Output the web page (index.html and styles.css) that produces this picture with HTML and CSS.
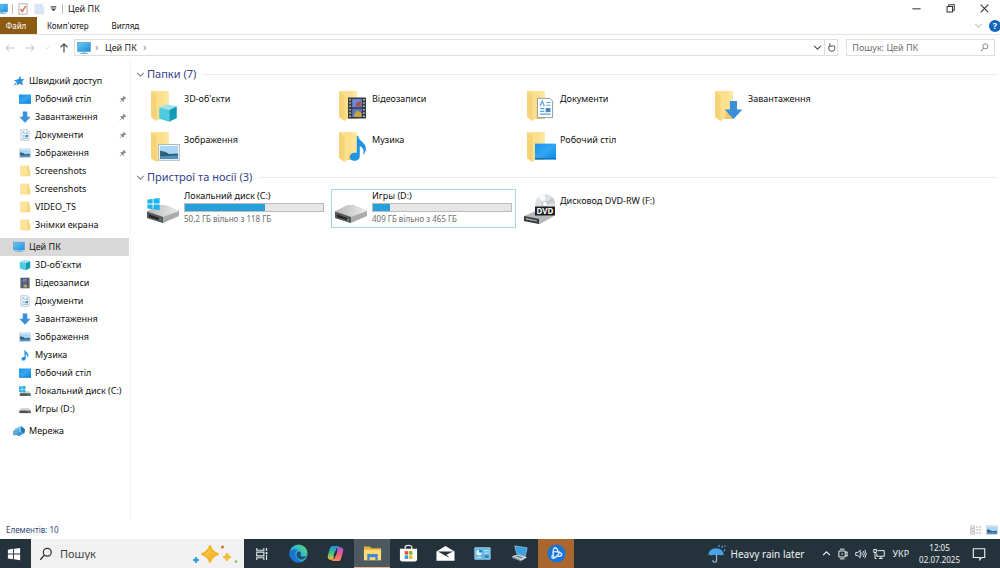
FILE: index.html
```html
<!DOCTYPE html>
<html lang="uk">
<head>
    <meta charset="UTF-8">
    <meta name="viewport" content="width=device-width, initial-scale=1.0">
    <title>Цей ПК</title>
    <link rel="stylesheet" href="styles.css">
</head>
<body>
    <!-- Icon sprite -->
    <svg class="sprite" aria-hidden="true">
        <defs>
            <linearGradient id="g-folder" x1="0" y1="0" x2="1" y2="0">
                <stop offset="0" stop-color="#f7d674"/><stop offset="1" stop-color="#ffe9a6"/>
            </linearGradient>
            <linearGradient id="g-screen" x1="0" y1="0" x2="1" y2="1">
                <stop offset="0" stop-color="#1795ec"/><stop offset="0.5" stop-color="#33a6f3"/><stop offset="1" stop-color="#0c86dd"/>
            </linearGradient>
            <linearGradient id="g-pc" x1="0" y1="0" x2="1" y2="1">
                <stop offset="0" stop-color="#6cc8f5"/><stop offset="1" stop-color="#1c8fdc"/>
            </linearGradient>
            <linearGradient id="g-drive" x1="0" y1="0" x2="1" y2="0">
                <stop offset="0" stop-color="#b9b9b9"/><stop offset="1" stop-color="#ececec"/>
            </linearGradient>
            <linearGradient id="g-edge" x1="0" y1="1" x2="1" y2="0">
                <stop offset="0" stop-color="#1068c4"/><stop offset="0.5" stop-color="#2bb3dc"/><stop offset="1" stop-color="#6bdc5c"/>
            </linearGradient>
            <linearGradient id="g-cop1" x1="0" y1="0" x2="0" y2="1">
                <stop offset="0" stop-color="#1e8fe8"/><stop offset="0.5" stop-color="#3cbf8f"/><stop offset="1" stop-color="#f2c12e"/>
            </linearGradient>
            <linearGradient id="g-cop2" x1="0" y1="0" x2="0" y2="1">
                <stop offset="0" stop-color="#a25be8"/><stop offset="0.5" stop-color="#ee5a8b"/><stop offset="1" stop-color="#f9904a"/>
            </linearGradient>
            <linearGradient id="g-star" x1="0" y1="0" x2="1" y2="1">
                <stop offset="0" stop-color="#ffd84a"/><stop offset="1" stop-color="#f0a31c"/>
            </linearGradient>
        </defs>

        <symbol id="i-pc" viewBox="0 0 16 16">
            <rect x="0.500" y="1.500" width="15" height="10.500" fill="url(#g-pc)" stroke="#5d9fc9" stroke-width="0.8"/>
            <path d="M6.500 12h3v1.500h-3z" fill="#8fa9bb"/>
            <path d="M3 13.500h10v1.200H3z" fill="#6fb4df"/>
        </symbol>
        <symbol id="i-star" viewBox="0 0 16 16">
            <path d="M9.500 1l1.300 4.300 4.700.4-3.500 3 1.400 5.300-4.400-2.500L5 14l.5-4.500L1 7l6-1.300z" fill="#2a93dd"/>
            <path d="M5 10L1.500 13.500" stroke="#2a93dd" stroke-width="1.400"/>
        </symbol>
        <symbol id="i-desktop" viewBox="0 0 16 16">
            <rect x="0" y="2" width="16" height="12" fill="url(#g-screen)"/>
            <rect x="0" y="13" width="16" height="1" fill="#0a6fc0"/>
        </symbol>
        <symbol id="i-down" viewBox="0 0 16 16">
            <path d="M5 0.500h6v7h4.500L8 15.500.5 7.500H5z" fill="#3a8fdb"/>
        </symbol>
        <symbol id="i-doc" viewBox="0 0 16 16">
            <path d="M2.500 1h9l2 2v12h-11z" fill="#fafcfe" stroke="#8f9aa3" stroke-width="0.700"/>
            <path d="M4.500 6.500l1.500-3.500 1.500 3.500M9 4h3M9 6h3M4.500 8.500h3M4.500 10.500h3M4.500 12.500h7.500" stroke="#5aa2d6" stroke-width="0.900" fill="none"/>
            <path d="M8.500 8h3.500v3h-3.500z" fill="#4a86b4"/>
        </symbol>
        <symbol id="i-image" viewBox="0 0 16 16">
            <rect x="0.500" y="2.500" width="15" height="11.500" fill="#fff" stroke="#a3b3bf" stroke-width="0.700"/>
            <rect x="1.500" y="3.500" width="13" height="9.500" fill="#a9d6f2"/>
            <path d="M1.500 7q4.500.5 6.500 2.500l6.500-.5v4h-13z" fill="#2f5f7a"/>
            <path d="M1.500 11l13-.5V13h-13z" fill="#4f93bd"/>
        </symbol>
        <symbol id="i-folder" viewBox="0 0 16 16">
            <path d="M2 1h11.500v4.500l1.500.5v9H2z" fill="#f5d67b"/>
            <path d="M2 1h9v13H2z" fill="#fce59a"/>
        </symbol>
        <symbol id="i-cube" viewBox="0 0 16 16">
            <path d="M1 3.500l6-2.500 8 1.500-6 3z" fill="#9be4ee"/>
            <path d="M1 3.500l8 2v9.500l-8-2.500z" fill="#4fcbe0"/>
            <path d="M9 5.500l6-3v9.500l-6 3z" fill="#119bb5"/>
        </symbol>
        <symbol id="i-film" viewBox="0 0 16 16">
            <rect x="2" y="1" width="12" height="14" fill="#333a4c"/>
            <rect x="4.800" y="2" width="6.400" height="5.500" fill="#6f88d8"/>
            <rect x="4.800" y="8.500" width="6.400" height="5.500" fill="#5a78c8"/>
            <path d="M6 12.500l2-3 3 2v2.500H6z" fill="#c9a53a"/>
            <path d="M7.500 5l3-2v4H7z" fill="#a8553f"/>
            <path d="M3.400 2v13M12.600 2v13" stroke="#c4c4a8" stroke-width="1.100" stroke-dasharray="1 1.200"/>
        </symbol>
        <symbol id="i-note" viewBox="0 0 16 16">
            <path d="M8 1c.3 3 5 4 4.500 8-.3 1.500-1 2.300-1.700 2.800.9-2.500.2-4-1.800-5v5.700c0 1.700-1.400 2.800-3 2.800S3.300 14.500 3.300 13.200s1.300-2.500 2.900-2.500c.4 0 .8 0 1.100.2V1z" fill="#1f93e0"/>
        </symbol>
        <symbol id="i-win" viewBox="0 0 16 16">
            <path d="M1 3l6-.9v5.400H1zM8 2l7-1v6.500H8zM1 8.500h6v5.400L1 13zM8 8.500h7V15l-7-1z"/>
        </symbol>
        <symbol id="i-drive-small" viewBox="0 0 16 16">
            <path d="M3 6.500h10l2.500 3.500H.5z" fill="#d4d4d4"/>
            <path d="M.5 10h15v3.500H.5z" fill="#4b4f52"/>
            <path d="M11.500 11.500h2" stroke="#79d48a"/>
        </symbol>
        <symbol id="i-drive-win" viewBox="0 0 16 16">
            <path d="M5 8h8l2.500 2.500H.5z" fill="#d4d4d4"/>
            <path d="M1 11h14.500v3.500H1z" fill="#4b4f52"/>
            <path d="M11.500 12.500h2" stroke="#79d48a"/>
            <path d="M0 2l3.700-.5v3.700H0zM4.400 1.500L8.500 1v4.200H4.400zM0 6h3.700v3.500L0 9zM4.400 6h4.100v4l-4.100-.5z" fill="#23afe3"/>
        </symbol>
        <symbol id="i-network" viewBox="0 0 16 16">
            <path d="M3 5l8-3.500 5 4.500-1 5-7 4-6-3z" fill="#3f9bd6"/>
            <path d="M3 5l8-3.500v7.500L4 11z" fill="#7cc3ea"/>
            <path d="M.5 8l7-1.500v5.500l-7 1.500z" fill="#5aaede" stroke="#2d81b8" stroke-width="0.600"/>
            <path d="M11 1.500L16 6l-1 5-4-2z" fill="#1f77b4"/>
        </symbol>
        <symbol id="i-pin" viewBox="0 0 16 16">
            <path d="M9.500 1.500l5 5-1.500.8-1 .2-2.500 2.500.3 2.500-1.300 1L2.500 7.500l1-1.300 2.500.3 2.500-2.500.2-1z" fill="#858b90"/>
            <path d="M5.500 10.500L1.500 14.500" stroke="#858b90" stroke-width="1.600"/>
        </symbol>

        <!-- Large icons -->
        <symbol id="l-folder" viewBox="0 0 32 32">
            <path d="M4 1h18v28H8z" fill="#eec868"/>
            <path d="M9 1h13v22H9z" fill="url(#g-folder)"/>
            <path d="M4 1h9.500l1 3v23l-5 4L4 27z" fill="#fbdf8c"/>
            <path d="M4 27l5.500 4V5L4 1z" fill="#f6d377"/>
        </symbol>
        <symbol id="l-drive" viewBox="0 0 32 32">
            <path d="M0 19.500L13 13h5l14 6v5L16 31 0 26z" fill="#a9abad"/>
            <path d="M0 19.500L13 13h5l14 6-16 6z" fill="url(#g-drive)"/>
            <path d="M0 19.500L16 25v6L0 26z" fill="#55595b"/>
            <path d="M2 22.500l10 3.500v2L2 25z" fill="#222"/>
            <path d="M12.500 27.500l1.500.4" stroke="#3fd08b"/>
        </symbol>

        <!-- Line icons -->
        <symbol id="i-search" viewBox="0 0 16 16">
            <circle cx="9.500" cy="6" r="4.500" fill="none" stroke="currentColor" stroke-width="1.400"/>
            <path d="M6.300 9.200L1.500 14.500" stroke="currentColor" stroke-width="1.600"/>
        </symbol>
        <symbol id="i-chevron" viewBox="0 0 16 16">
            <path d="M2 5l6 6 6-6" fill="none" stroke="currentColor" stroke-width="2"/>
        </symbol>
        <symbol id="i-right" viewBox="0 0 16 16">
            <path d="M5 3l5 5-5 5" fill="none" stroke="currentColor" stroke-width="2.500"/>
        </symbol>
        <symbol id="i-arrow" viewBox="0 0 16 16">
            <path d="M14 8H2.500M7 3.500L2.500 8 7 12.500" fill="none" stroke="currentColor" stroke-width="1.700"/>
        </symbol>
    </svg>

    <div class="window">
        <header class="titlebar">
            <div class="quick-access">
                <svg class="icon title-pc"><use href="#i-pc"/></svg>
                <span class="divider"></span>
                <button class="plain" aria-label="Властивості">
                    <svg class="icon" viewBox="0 0 16 16"><path d="M2.500 1h11v14h-11z" fill="#fafafa" stroke="#9b9b9b"/><path d="M4.500 8l2.500 3.500L11.500 4" fill="none" stroke="#d6603c" stroke-width="1.700"/></svg>
                </button>
                <button class="plain" aria-label="Нова папка">
                    <svg class="icon" viewBox="0 0 16 16"><path d="M2 1h11v4h2v10H2z" fill="#dbe6f4"/></svg>
                </button>
                <button class="plain" aria-label="Настроїти панель">
                    <svg class="icon small" viewBox="0 0 16 16"><path d="M3 4h10v2H3zM3 8h10l-5 5z" fill="#444"/></svg>
                </button>
                <span class="divider"></span>
            </div>
            <h1>Цей ПК</h1>
            <div class="window-buttons">
                <button class="plain" aria-label="Згорнути"><svg class="icon" viewBox="0 0 16 16"><path d="M2 8.500h12" stroke="#333" stroke-width="1.500"/></svg></button>
                <button class="plain" aria-label="Відновити"><svg class="icon" viewBox="0 0 16 16"><path d="M3 5h8v8H3zM5.500 5V2.700h8v8H11" fill="none" stroke="#333" stroke-width="1.500"/></svg></button>
                <button class="plain" aria-label="Закрити"><svg class="icon" viewBox="0 0 16 16"><path d="M2.500 2.500l11 11M13.500 2.500l-11 11" stroke="#333" stroke-width="1.500"/></svg></button>
            </div>
        </header>

        <div class="ribbon">
            <button class="tab file">Файл</button>
            <button class="tab">Комп'ютер</button>
            <button class="tab">Вигляд</button>
            <div class="ribbon-end">
                <button class="plain" aria-label="Розгорнути стрічку"><svg class="icon small pale"><use href="#i-chevron"/></svg></button>
                <button class="help" aria-label="Довідка">?</button>
            </div>
        </div>

        <div class="address-row">
            <div class="nav-buttons">
                <button class="plain pale" aria-label="Назад"><svg class="icon"><use href="#i-arrow"/></svg></button>
                <button class="plain pale" aria-label="Вперед"><svg class="icon flip"><use href="#i-arrow"/></svg></button>
                <button class="plain pale" aria-label="Останні"><svg class="icon tiny"><use href="#i-chevron"/></svg></button>
                <button class="plain" aria-label="Вгору"><svg class="icon up"><use href="#i-arrow"/></svg></button>
            </div>
            <div class="address">
                <svg class="icon address-pc"><use href="#i-pc"/></svg>
                <svg class="icon tiny"><use href="#i-right"/></svg>
                <a href="#">Цей ПК</a>
                <svg class="icon tiny"><use href="#i-right"/></svg>
                <button class="plain address-menu" aria-label="Попередні розташування"><svg class="icon small"><use href="#i-chevron"/></svg></button>
                <button class="plain refresh" aria-label="Оновити"><svg class="icon small" viewBox="0 0 16 16"><path d="M11.500 4.500a5.500 5.500 0 1 1-6 0M5 0v5.500h5.500" fill="none" stroke="#666" stroke-width="1.900"/></svg></button>
            </div>
            <div class="search-box">
                <input type="text" placeholder="Пошук: Цей ПК" aria-label="Пошук: Цей ПК">
                <svg class="icon small"><use href="#i-search"/></svg>
            </div>
        </div>

        <div class="main">
            <nav class="sidebar">
                <ul>
                    <li class="root"><a href="#"><svg class="icon"><use href="#i-star"/></svg>Швидкий доступ</a></li>
                    <li><a href="#"><svg class="icon"><use href="#i-desktop"/></svg>Робочий стіл<svg class="pin"><use href="#i-pin"/></svg></a></li>
                    <li><a href="#"><svg class="icon"><use href="#i-down"/></svg>Завантаження<svg class="pin"><use href="#i-pin"/></svg></a></li>
                    <li><a href="#"><svg class="icon"><use href="#i-doc"/></svg>Документи<svg class="pin"><use href="#i-pin"/></svg></a></li>
                    <li><a href="#"><svg class="icon"><use href="#i-image"/></svg>Зображення<svg class="pin"><use href="#i-pin"/></svg></a></li>
                    <li><a href="#"><svg class="icon"><use href="#i-folder"/></svg>Screenshots</a></li>
                    <li><a href="#"><svg class="icon"><use href="#i-folder"/></svg>Screenshots</a></li>
                    <li><a href="#"><svg class="icon"><use href="#i-folder"/></svg>VIDEO_TS</a></li>
                    <li><a href="#"><svg class="icon"><use href="#i-folder"/></svg>Знімки екрана</a></li>
                </ul>
                <ul>
                    <li class="root current"><a href="#"><svg class="icon"><use href="#i-pc"/></svg>Цей ПК</a></li>
                    <li><a href="#"><svg class="icon"><use href="#i-cube"/></svg>3D-об'єкти</a></li>
                    <li><a href="#"><svg class="icon"><use href="#i-film"/></svg>Відеозаписи</a></li>
                    <li><a href="#"><svg class="icon"><use href="#i-doc"/></svg>Документи</a></li>
                    <li><a href="#"><svg class="icon"><use href="#i-down"/></svg>Завантаження</a></li>
                    <li><a href="#"><svg class="icon"><use href="#i-image"/></svg>Зображення</a></li>
                    <li><a href="#"><svg class="icon"><use href="#i-note"/></svg>Музика</a></li>
                    <li><a href="#"><svg class="icon"><use href="#i-desktop"/></svg>Робочий стіл</a></li>
                    <li><a href="#"><svg class="icon"><use href="#i-drive-win"/></svg>Локальний диск (C:)</a></li>
                    <li><a href="#"><svg class="icon"><use href="#i-drive-small"/></svg>Игры (D:)</a></li>
                </ul>
                <ul>
                    <li class="root"><a href="#"><svg class="icon"><use href="#i-network"/></svg>Мережа</a></li>
                </ul>
            </nav>

            <main class="content">
                <section>
                    <h2><svg class="icon small"><use href="#i-chevron"/></svg>Папки (7)</h2>
                    <div class="tiles folders">
                        <a class="tile" href="#">
                            <svg class="large" viewBox="0 0 32 32"><use href="#l-folder"/><use href="#i-cube" x="11" y="13" width="20" height="20"/></svg>
                            <span class="name">3D-об'єкти</span>
                        </a>
                        <a class="tile" href="#">
                            <svg class="large" viewBox="0 0 32 32"><use href="#l-folder"/><use href="#i-film" x="10" y="6" width="24" height="24"/></svg>
                            <span class="name">Відеозаписи</span>
                        </a>
                        <a class="tile" href="#">
                            <svg class="large" viewBox="0 0 32 32"><use href="#l-folder"/><use href="#i-doc" x="11" y="7" width="22" height="22"/></svg>
                            <span class="name">Документи</span>
                        </a>
                        <a class="tile" href="#">
                            <svg class="large" viewBox="0 0 32 32"><use href="#l-folder"/><use href="#i-down" x="13" y="10" width="19" height="20"/></svg>
                            <span class="name">Завантаження</span>
                        </a>
                        <a class="tile" href="#">
                            <svg class="large" viewBox="0 0 32 32"><use href="#l-folder"/><use href="#i-image" x="11" y="10" width="22" height="22"/></svg>
                            <span class="name">Зображення</span>
                        </a>
                        <a class="tile" href="#">
                            <svg class="large" viewBox="0 0 32 32"><use href="#l-folder"/><use href="#i-note" x="9" y="3" width="28" height="28"/></svg>
                            <span class="name">Музика</span>
                        </a>
                        <a class="tile" href="#">
                            <svg class="large" viewBox="0 0 32 32"><use href="#l-folder"/><use href="#i-desktop" x="12" y="10" width="21" height="21"/></svg>
                            <span class="name">Робочий стіл</span>
                        </a>
                    </div>
                </section>
                <section>
                    <h2><svg class="icon small"><use href="#i-chevron"/></svg>Пристрої та носії (3)</h2>
                    <div class="tiles">
                        <a class="tile drive" href="#">
                            <svg class="large" viewBox="0 0 32 32"><use href="#l-drive"/><use href="#i-win" x="-1" y="5" width="15" height="14" fill="#1fb4ea"/></svg>
                            <span class="info">
                                <span class="name">Локальний диск (C:)</span>
                                <span class="bar"><span class="used" style="width: 58%"></span></span>
                                <span class="free">50,2 ГБ вільно з 118 ГБ</span>
                            </span>
                        </a>
                        <a class="tile drive selected" href="#">
                            <svg class="large" viewBox="0 0 32 32"><use href="#l-drive"/></svg>
                            <span class="info">
                                <span class="name">Игры (D:)</span>
                                <span class="bar"><span class="used" style="width: 12%"></span></span>
                                <span class="free">409 ГБ вільно з 465 ГБ</span>
                            </span>
                        </a>
                        <a class="tile disc" href="#">
                            <svg class="large" viewBox="0 0 32 32">
                                <path d="M1 24L13 19h18v5l-14 8-16-3z" fill="#b5b7b9"/>
                                <path d="M1 24l15 3v5L1 29z" fill="#383b3d"/>
                                <path d="M3 26l11 2.500v1L3 27.500z" fill="#b5b7b9"/>
                                <circle cx="22" cy="12" r="10" fill="#dde1e4"/>
                                <path d="M22 12L15 5a10 10 0 0 1 7-3zM22 12l9.500 3a10 10 0 0 1-2 3.500z" fill="#f6f8f9"/>
                                <path d="M22 12l7-7a10 10 0 0 1 3 6z" fill="#c5cdd1"/>
                                <circle cx="22" cy="12" r="2.600" fill="#fff" stroke="#aab0b4" stroke-width="0.700"/>
                                <rect x="12" y="14.500" width="20" height="9" rx="0.500" fill="#1c1e20"/>
                                <text x="22" y="22" class="dvd-text">DVD</text>
                            </svg>
                            <span class="name">Дисковод DVD-RW (F:)</span>
                        </a>
                    </div>
                </section>
            </main>
        </div>

        <footer class="status">
            <span>Елементів: 10</span>
            <div class="views">
                <button class="plain" aria-label="Таблиця"><svg class="icon" viewBox="0 0 16 16"><path d="M1 2.500h5v3H1zM1 6.500h5v3H1zM1 10.500h5v3H1z" fill="none" stroke="#aaa"/><path d="M8 4h7M8 8h7M8 12h7" stroke="#999" stroke-dasharray="3 1"/></svg></button>
                <button class="plain" aria-label="Великі ескізи"><svg class="icon"><use href="#i-image"/></svg></button>
            </div>
        </footer>
    </div>

    <!-- Taskbar -->
    <div class="taskbar">
        <button class="start" aria-label="Пуск"><svg class="icon" fill="#fff"><use href="#i-win"/></svg></button>
        <div class="task-search">
            <svg class="icon"><use href="#i-search"/></svg>
            <input type="text" placeholder="Пошук" aria-label="Пошук">
            <svg class="sparkles" viewBox="0 0 46 22">
                <path d="M18 3q1.800 6 8 8-6.200 2-8 8-1.800-6-8-8 6.200-2 8-8z" fill="url(#g-star)" stroke="#f3b42a" stroke-width="2" stroke-linejoin="round"/>
                <path d="M35 10q.8 3.200 4 4-3.200.8-4 4-.8-3.200-4-4 3.200-.8 4-4z" fill="#f5bf35" stroke="#f3b42a"/>
                <path d="M4 14q.5 2.500 3 3-2.500.5-3 3-.5-2.500-3-3 2.500-.5 3-3z" fill="#2d9be0" stroke="#2d9be0"/>
                <circle cx="30.500" cy="4" r="1.600" fill="#d9713c"/>
                <circle cx="44" cy="18.500" r="1.300" fill="#8dbb62"/>
            </svg>
        </div>
        <div class="apps">
            <button class="view" aria-label="Подання завдань">
                <svg class="icon" viewBox="0 0 16 16"><path d="M1 0v3h9.500V0M1 16v-3h9.500v3M1 5.500h9.500v5H1zM14 0v4M14 9v7" fill="none" stroke="#e4e8ea" stroke-width="1.500"/><path d="M12.800 5.500h2.500v2.500h-2.500z" fill="#e4e8ea"/></svg>
            </button>
            <button aria-label="Microsoft Edge">
                <svg class="app" viewBox="0 0 20 20">
                    <circle cx="10" cy="10" r="9.500" fill="url(#g-edge)"/>
                    <path d="M.5 11C1 6 6 4.500 9.500 6.500 6 7.500 5.500 12 8 15c1.200 1.800 3 3 5 3.800A9.500 9.500 0 0 1 .5 11z" fill="#1b72d0"/>
                    <path d="M9.500 8c2.500-.5 4 1.500 2.700 3.600-.6 1.400 3.800 2.500 6.300.7-1 2.200-3 4-6 4C8 15.500 6.500 10.500 9.500 8z" fill="#22506f"/>
                </svg>
            </button>
            <button aria-label="Copilot">
                <svg class="app" viewBox="0 0 20 20">
                    <path d="M7 2h5c1.500 0 2 1 2.500 2.500H11L8 14.500c-.5 1.500-1 2-2.500 2C2 16.500 1.500 14 2 12L4 5c.6-2 1.500-3 3-3z" fill="url(#g-cop1)"/>
                    <path d="M13 18H8c-1.500 0-2-1-2.500-2.500H9L12 5.500c.5-1.500 1-2 2.500-2C18 3.500 18.500 6 18 8l-2 7c-.6 2-1.500 3-3 3z" fill="url(#g-cop2)"/>
                    <path d="M9.500 7.500h2.500l-1.700 5H7.800z" fill="#24333b"/>
                </svg>
            </button>
            <button class="open" aria-label="Провідник">
                <svg class="app" viewBox="0 0 20 20">
                    <path d="M1 2.500h6l2 2h10v12.500H1z" fill="#e8b23a"/>
                    <path d="M1 6h18v11H1z" fill="#fcdb78"/>
                    <path d="M4.500 10.500h11V17H13v-3H7v3H4.500z" fill="#4289cf"/>
                </svg>
            </button>
            <button aria-label="Microsoft Store">
                <svg class="app" viewBox="0 0 20 20">
                    <path d="M6.500 6V3.500q0-2 3.500-2t3.500 2V6" fill="none" stroke="#dfe3e5" stroke-width="1.400"/>
                    <path d="M1 5h18v11q0 2.500-2.500 2.500h-13Q1 18.500 1 16z" fill="#fff"/>
                    <path d="M6 7.500h3.700v3.700H6z" fill="#e8502f"/><path d="M10.500 7.500h3.700v3.700h-3.700z" fill="#7fb82e"/>
                    <path d="M6 12h3.700v3.700H6z" fill="#2c9de0"/><path d="M10.500 12h3.700v3.700h-3.700z" fill="#f7b922"/>
                </svg>
            </button>
            <button aria-label="Пошта">
                <svg class="app" viewBox="0 0 20 20">
                    <path d="M.5 8L10 2l9.500 6v9.500H.5z" fill="#fff"/>
                    <path d="M2 8h16l-7 3.200 3.500 3.300L9.500 12z" fill="#24333b"/>
                </svg>
            </button>
            <button aria-label="Панель керування">
                <svg class="app" viewBox="0 0 20 20">
                    <path d="M2 4h16v12H2z" fill="#5fb4e2" stroke="#a6d8f0"/>
                    <circle cx="6.500" cy="9" r="3" fill="#d9f0fb"/><path d="M6.500 9V6a3 3 0 0 1 3 3z" fill="#1f74ad"/>
                    <path d="M11.500 7h5M11.500 9.500h5M4 14h5" stroke="#b9e2f5" stroke-width="1.300"/>
                    <path d="M12.500 12h4v2.500h-4z" fill="#2880ba"/>
                </svg>
            </button>
            <button aria-label="Віддалений робочий стіл">
                <svg class="app" viewBox="0 0 20 20">
                    <path d="M5 2l13 2-2 9.500-9-3.500z" fill="#3c9fe0" stroke="#9ed0ef" stroke-width="0.700"/>
                    <path d="M2 13l6-2 10 3-6 3.500z" fill="#d4dbe0"/>
                    <path d="M2 13l10 4.500v1L2 14.500z" fill="#8999a3"/>
                    <path d="M5.500 13l2.500-.8 6 2-2.500 1.200z" fill="#718895"/>
                </svg>
            </button>
            <button class="alert" aria-label="Battle.net">
                <svg class="app" viewBox="0 0 20 20">
                    <circle cx="10" cy="10" r="9.500" fill="#1674dc"/>
                    <path d="M7.500 14.500C6 11 6 5.500 8 4c1.500-.5 3 1.500 3.500 3.500M6 8.500c4-1.300 9.500.5 9.500 2.500 0 1.500-2 2-4 2M13 8.500c-1 3-4 6.500-6.500 6.500-1.500 0-1.500-1.500-.8-3" fill="none" stroke="#d9ecff" stroke-width="1.500" stroke-linecap="round"/>
                </svg>
            </button>
        </div>
        <div class="tray">
            <button class="weather">
                <svg class="app" viewBox="0 0 20 20">
                    <path d="M0 12Q1 5 8.500 4.500 16 5 17 12q-2-1.500-4 0-2-1.500-4.500 0-2-1.500-4.500 0-2-1.500-4 0z" fill="#4aa3e6"/>
                    <path d="M9 11v6q0 2-2 2t-2-2" fill="none" stroke="#8db7d6" stroke-width="1.300"/>
                    <path d="M11 3l1-2M14.500 4l1-2M17 7.500l1-2M17.500 3l.7-1.500" stroke="#4aa3e6" stroke-width="1.300"/>
                </svg>
                Heavy rain later
            </button>
            <button aria-label="Приховані піктограми"><svg class="icon small turn"><use href="#i-chevron"/></svg></button>
            <button aria-label="Камера"><svg class="icon" viewBox="0 0 16 16"><path d="M4 1.500h6M2.500 4h8.500v8H2.500zM11 6.500L13.500 5v6L11 9.500M4 14.500h6" fill="none" stroke="currentColor" stroke-width="1.300"/><circle cx="6.800" cy="8" r="1" fill="currentColor"/></svg></button>
            <button aria-label="Гучність"><svg class="icon" viewBox="0 0 16 16"><path d="M1 6h2.500L7 3v10L3.500 10H1zM9 6q1.500 2 0 4M11 4q3 4 0 8M13 2.500q4 5.500 0 11" fill="none" stroke="currentColor" stroke-width="1.200"/></svg></button>
            <button aria-label="Мережа"><svg class="icon" viewBox="0 0 16 16"><path d="M6 3.500h9v7.500H5V7.500M8 14h5M10.500 11v3M1 2h3.500v4H1zM2.700 6v8h2" fill="none" stroke="currentColor" stroke-width="1.300"/></svg></button>
            <button class="lang">УКР</button>
            <button class="clock"><time>12:05</time><time>02.07.2025</time></button>
            <button class="notes" aria-label="Сповіщення"><svg class="icon" viewBox="0 0 16 16"><path d="M1.500 2h13v10H11l-2 2.500V12H1.500z" fill="none" stroke="currentColor" stroke-width="1.300"/></svg></button>
        </div>
    </div>
</body>
</html>
```

FILE: styles.css
```css
* {
    box-sizing: border-box;
}

body {
    margin: 0;
    height: 100vh;
    display: flex;
    flex-direction: column;
    overflow: hidden;
    background: white;
    color: #111;
    font-family: "Noto Sans", "Open Sans", sans-serif;
    font-size: 9px;
    line-height: 12px;
}

a {
    color: inherit;
    text-decoration: none;
}

button,
input {
    font: inherit;
    color: inherit;
    border: none;
    background: none;
    padding: 0;
    min-width: 0;
}

button {
    display: flex;
    align-items: center;
    justify-content: center;
}

h1,
h2,
ul {
    margin: 0;
    padding: 0;
    font-weight: normal;
}

.sprite {
    position: absolute;
    width: 0;
    height: 0;
}

.icon {
    width: 12px;
    height: 12px;
    flex: none;
}

.icon.small {
    width: 9px;
    height: 9px;
}

.icon.tiny {
    width: 6px;
    height: 6px;
}

.flip {
    transform: scaleX(-1);
}

.up {
    transform: rotate(90deg);
}

.turn {
    transform: rotate(180deg);
}

.pale {
    color: #c4c4c4;
}

.window {
    flex: 1;
    min-height: 0;
    display: flex;
    flex-direction: column;
}

/* Title bar */
.titlebar {
    display: flex;
    align-items: center;
    height: 17px;
}

.quick-access {
    display: flex;
    align-items: center;
    gap: 4px;
    margin-right: 5px;
}

.title-pc {
    margin-left: -4px;
}

.divider {
    width: 1px;
    height: 10px;
    background: #bbb;
}

h1 {
    font-size: 9px;
}

.window-buttons {
    display: flex;
    gap: 23px;
    margin-left: auto;
    padding-right: 10px;
}

.window-buttons .icon {
    width: 11px;
    height: 11px;
}

/* Ribbon */
.ribbon {
    display: flex;
    height: 18px;
    border-bottom: 1px solid #e3e3e3;
}

.tab {
    padding: 0 10px;
    margin-right: 3px;
    font-size: 8px;
}

.tab.file {
    width: 37px;
    margin-right: 0;
    padding: 0 5px 0 0;
    background: #8c5a12;
    color: white;
}

.ribbon-end {
    display: flex;
    align-items: center;
    gap: 6px;
    margin-left: auto;
    margin-right: -1px;
}

.help {
    width: 12px;
    height: 12px;
    border-radius: 50%;
    background: #1166b8;
    color: white;
    font-weight: bold;
}

/* Address bar */
.address-row {
    display: flex;
    align-items: center;
    gap: 8px;
    padding: 4px 5px 4px 4px;
}

.nav-buttons {
    display: flex;
    align-items: center;
    gap: 8px;
    margin-right: -4px;
    color: #555;
}

.nav-buttons .pale {
    color: #d2d2d2;
}

.address {
    display: flex;
    align-items: center;
    flex: 1;
    gap: 5px;
    height: 17px;
    padding-left: 2px;
    border: 1px solid #dedede;
    color: #222;
}

.address > .tiny {
    color: #666;
}

.address-pc {
    width: 14px;
    height: 14px;
    margin-right: -2px;
}

.address-menu {
    margin-left: auto;
    margin-right: -3px;
    color: #555;
}

.refresh {
    width: 13px;
    height: 15px;
    border-left: 1px solid #dedede;
}

.search-box {
    display: flex;
    align-items: center;
    width: 15%;
    height: 17px;
    padding: 0 5px;
    border: 1px solid #dedede;
    color: #666;
}

.search-box input {
    flex: 1;
}

input::placeholder {
    color: #6d6d6d;
    opacity: 1;
}

/* Folder tree and content */
.main {
    flex: 1;
    display: flex;
    min-height: 0;
}

.sidebar {
    width: 131px;
    padding: 12px 1px 0 0;
    border-right: 1px solid #f2f2f2;
}

.sidebar ul {
    margin-bottom: 4px;
    list-style: none;
}

.sidebar a {
    display: flex;
    align-items: center;
    gap: 4px;
    height: 18px;
    padding-left: 19px;
    white-space: nowrap;
}

.sidebar .root a {
    padding-left: 13px;
}

.sidebar .current {
    background: #d9d9d9;
}

.pin {
    width: 8px;
    height: 8px;
    margin-left: auto;
    margin-right: 2px;
}

.content {
    flex: 1;
    padding: 6px 2px 0 5px;
}

h2 {
    display: flex;
    align-items: center;
    gap: 2px;
    height: 16px;
    color: #35418a;
    font-size: 11px;
    line-height: 16px;
}

h2::after {
    content: "";
    flex: 1;
    height: 1px;
    margin-left: 4px;
    background: #ececec;
}

h2 .icon {
    color: #888;
}

.tiles {
    display: grid;
    grid-template-columns: repeat(auto-fill, 185px);
    column-gap: 3px;
    padding: 4px 0 0 7px;
}

.folders {
    padding-top: 5px;
}

.tile {
    display: flex;
    gap: 5px;
    height: 39px;
    padding: 2px 3px;
    border: 1px solid transparent;
}

.folders .tile {
    height: 41px;
}

.large {
    width: 32px;
    height: 32px;
    flex: none;
    overflow: visible;
}

.tile > .name {
    padding-top: 3px;
}

.info {
    display: flex;
    flex-direction: column;
    flex: 1;
}

.info .name {
    margin-top: -2px;
}

.bar {
    height: 10px;
    margin: 1px 0;
    border: 1px solid #bcbcbc;
    background: #e6e6e6;
}

.used {
    display: block;
    height: 100%;
    background: #26a0da;
}

.free {
    color: #6d6d6d;
    font-size: 8px;
}

.selected {
    border-color: #a4dbea;
}

.dvd-text {
    fill: white;
    font-size: 8px;
    font-weight: bold;
    text-anchor: middle;
}

/* Status bar */
.status {
    display: flex;
    align-items: center;
    justify-content: space-between;
    height: 18px;
    padding: 0 2px 0 6px;
    color: #2c3f70;
    font-size: 8px;
}

.views {
    display: flex;
    gap: 4px;
}

/* Taskbar */
.taskbar {
    display: flex;
    height: 29px;
    background: #24333b;
    color: #eef1f2;
}

.start {
    width: 31px;
    padding-right: 4px;
}

.start .icon {
    width: 14px;
    height: 14px;
}

.task-search {
    display: flex;
    align-items: center;
    gap: 7px;
    width: 213px;
    padding: 0 6px 0 8px;
    background: #f1f1f1;
    color: #333;
    font-size: 11px;
}

.task-search input {
    flex: 1;
}

.task-search input::placeholder {
    color: #444;
}

.task-search .icon {
    width: 14px;
    height: 14px;
}

.sparkles {
    width: 46px;
    height: 22px;
}

.apps {
    display: flex;
}

.apps button {
    width: 37px;
}

.apps .view,
.apps .open,
.apps .alert {
    width: 36px;
}

.app {
    width: 19px;
    height: 19px;
    flex: none;
}

.apps .open {
    background: #4c595f;
    border-bottom: 1px solid #e2b08a;
}

.apps .alert {
    background: #a9662e;
}

.tray {
    display: flex;
    align-items: center;
    gap: 6px;
    margin-left: auto;
    padding-right: 14px;
}

.weather {
    gap: 4px;
    margin-right: 12px;
    font-size: 10px;
}

.lang {
    margin-left: 1px;
}

.clock {
    flex-direction: column;
    margin: 0 6px 0 4px;
    font-size: 8px;
}

.notes .icon {
    width: 14px;
    height: 14px;
}
```
